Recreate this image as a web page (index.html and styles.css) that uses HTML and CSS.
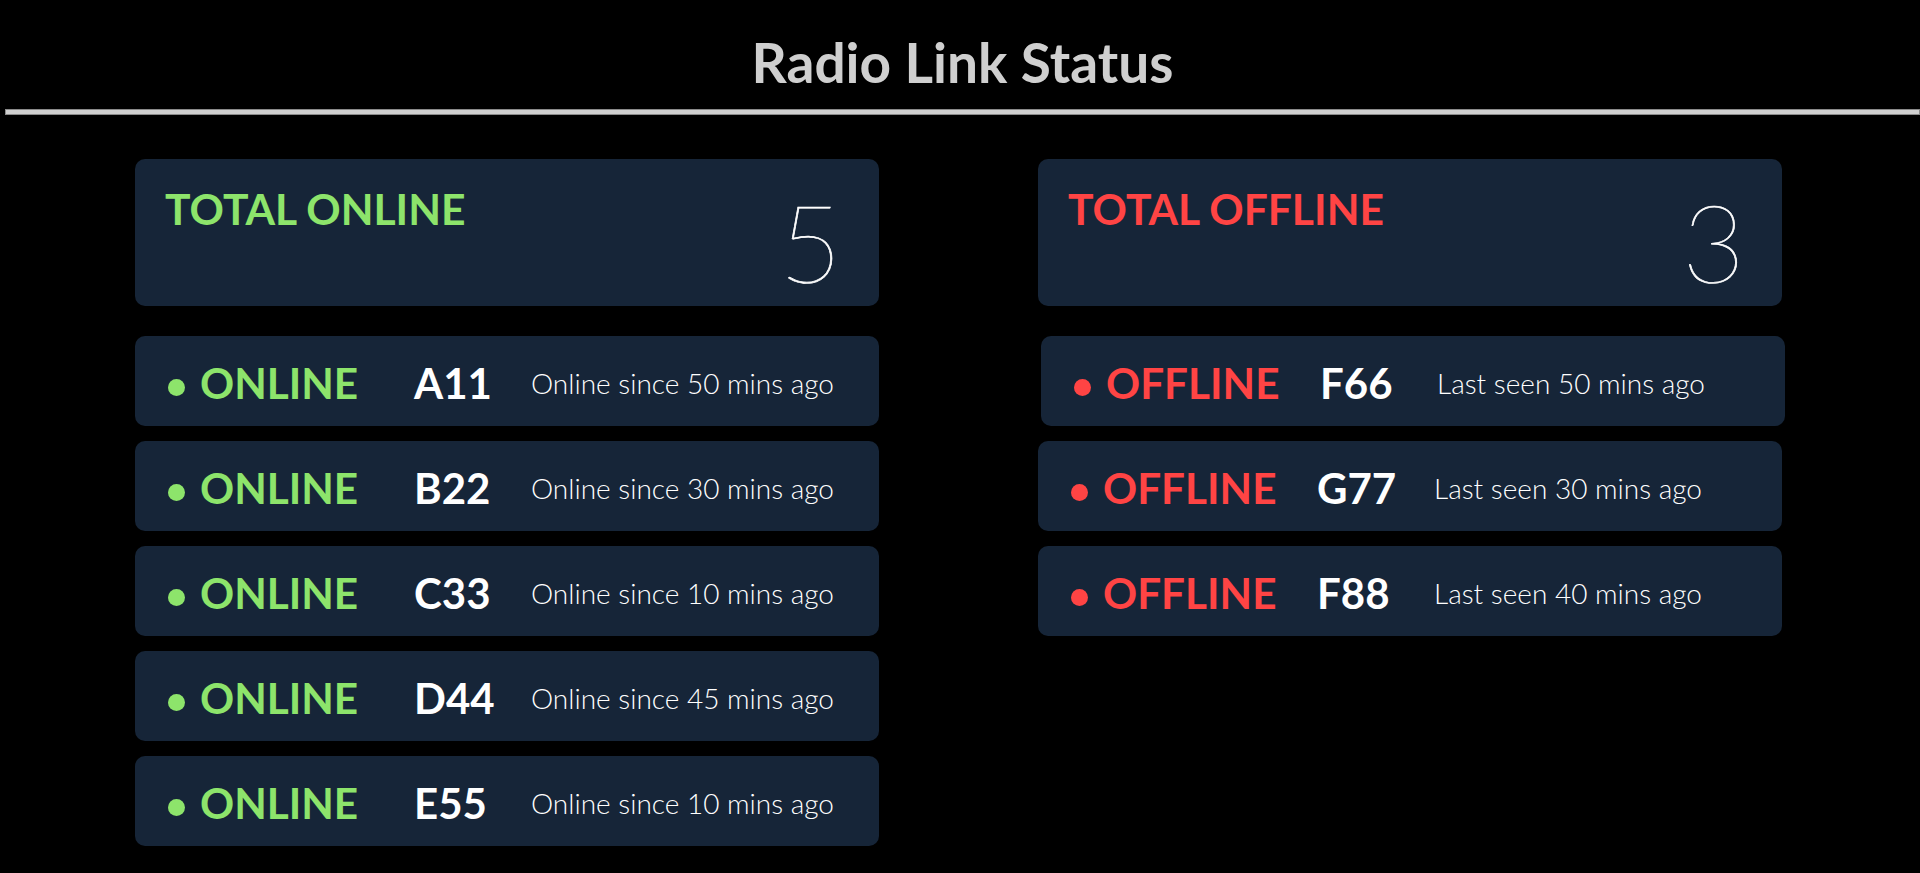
FILE: index.html
```html
<!DOCTYPE html>
<html lang="en">
<head>
<meta charset="utf-8">
<title>Radio Link Status</title>
<link rel="stylesheet" href="styles.css">
</head>
<body>
<div class="page">
  <header class="header">
    <h1 class="title">Radio Link Status</h1>
    <hr class="rule">
  </header>
  <main class="columns">
    <section class="column">
      <div class="total-card">
        <h2 class="total-label online">TOTAL ONLINE</h2>
        <div class="total-count">5</div>
      </div>
      <div class="row">
        <div class="status online"><span class="dot"></span>ONLINE</div>
        <div class="link-id">A11</div>
        <div class="since">Online since 50 mins ago</div>
      </div>
      <div class="row">
        <div class="status online"><span class="dot"></span>ONLINE</div>
        <div class="link-id">B22</div>
        <div class="since">Online since 30 mins ago</div>
      </div>
      <div class="row">
        <div class="status online"><span class="dot"></span>ONLINE</div>
        <div class="link-id">C33</div>
        <div class="since">Online since 10 mins ago</div>
      </div>
      <div class="row">
        <div class="status online"><span class="dot"></span>ONLINE</div>
        <div class="link-id">D44</div>
        <div class="since">Online since 45 mins ago</div>
      </div>
      <div class="row">
        <div class="status online"><span class="dot"></span>ONLINE</div>
        <div class="link-id">E55</div>
        <div class="since">Online since 10 mins ago</div>
      </div>
    </section>
    <section class="column">
      <div class="total-card">
        <h2 class="total-label offline">TOTAL OFFLINE</h2>
        <div class="total-count">3</div>
      </div>
      <div class="row is-hovered">
        <div class="status offline"><span class="dot"></span>OFFLINE</div>
        <div class="link-id">F66</div>
        <div class="since">Last seen 50 mins ago</div>
      </div>
      <div class="row">
        <div class="status offline"><span class="dot"></span>OFFLINE</div>
        <div class="link-id">G77</div>
        <div class="since">Last seen 30 mins ago</div>
      </div>
      <div class="row">
        <div class="status offline"><span class="dot"></span>OFFLINE</div>
        <div class="link-id">F88</div>
        <div class="since">Last seen 40 mins ago</div>
      </div>
    </section>
  </main>
</div>
</body>
</html>
```

FILE: styles.css
```css
* {
  box-sizing: border-box;
}

html, body {
  margin: 0;
  padding: 0;
  background: #000;
  height: 100%;
  overflow: hidden;
}

body {
  font-family: Lato, "Open Sans", "Liberation Sans", sans-serif;
  color: #fff;
}

.page {
  padding-left: 5px;
}

.header {
  display: flex;
  flex-direction: column;
}

.title {
  margin: 29px 0 0;
  text-align: center;
  font-size: 55px;
  font-weight: 700;
  line-height: 1.2;
  color: #cfcfcf;
}

.rule {
  margin: 14px 0 0;
  height: 6px;
  border: 1px solid #8a8a8a;
  background: #d0d0d0;
}

.columns {
  display: flex;
  gap: 159px;
  padding-left: 130px;
  margin-top: 44px;
}

.column {
  width: 744px;
  display: flex;
  flex-direction: column;
  gap: 15px;
}

.total-card {
  height: 147px;
  margin-bottom: 15px;
  padding: 29px 37px 0 30px;
  background: #162538;
  border-radius: 10px;
  display: flex;
  justify-content: space-between;
  align-items: flex-start;
}

.total-label {
  margin: 0;
  font-size: 42.6px;
  font-weight: 700;
  line-height: 1;
}

.online {
  color: #8de46b;
}

.offline {
  color: #ff4444;
}

.total-count {
  margin-top: -1px;
  font-size: 108px;
  font-weight: 100;
  line-height: 1;
  color: #fff;
  -webkit-text-stroke: 0.7px #fff;
}

.row {
  height: 90px;
  padding-left: 33px;
  background: #162538;
  border-radius: 10px;
  display: grid;
  grid-template-columns: 246px 117px auto;
  align-items: center;
}

.row.is-hovered {
  transform: translateX(3px);
}

.status {
  display: flex;
  align-items: center;
  gap: 15px;
  padding-top: 4px;
  font-size: 42.3px;
  font-weight: 700;
  line-height: 1.2;
}

.dot {
  width: 17px;
  height: 17px;
  margin-top: 9px;
  border-radius: 50%;
  background: currentColor;
  flex: none;
}

.link-id {
  padding-top: 4px;
  font-size: 42px;
  font-weight: 700;
  line-height: 1.2;
  color: #fff;
}

.since {
  font-size: 28px;
  font-weight: 300;
  line-height: 1.2;
  color: #fff;
  padding-top: 5px;
}
```
